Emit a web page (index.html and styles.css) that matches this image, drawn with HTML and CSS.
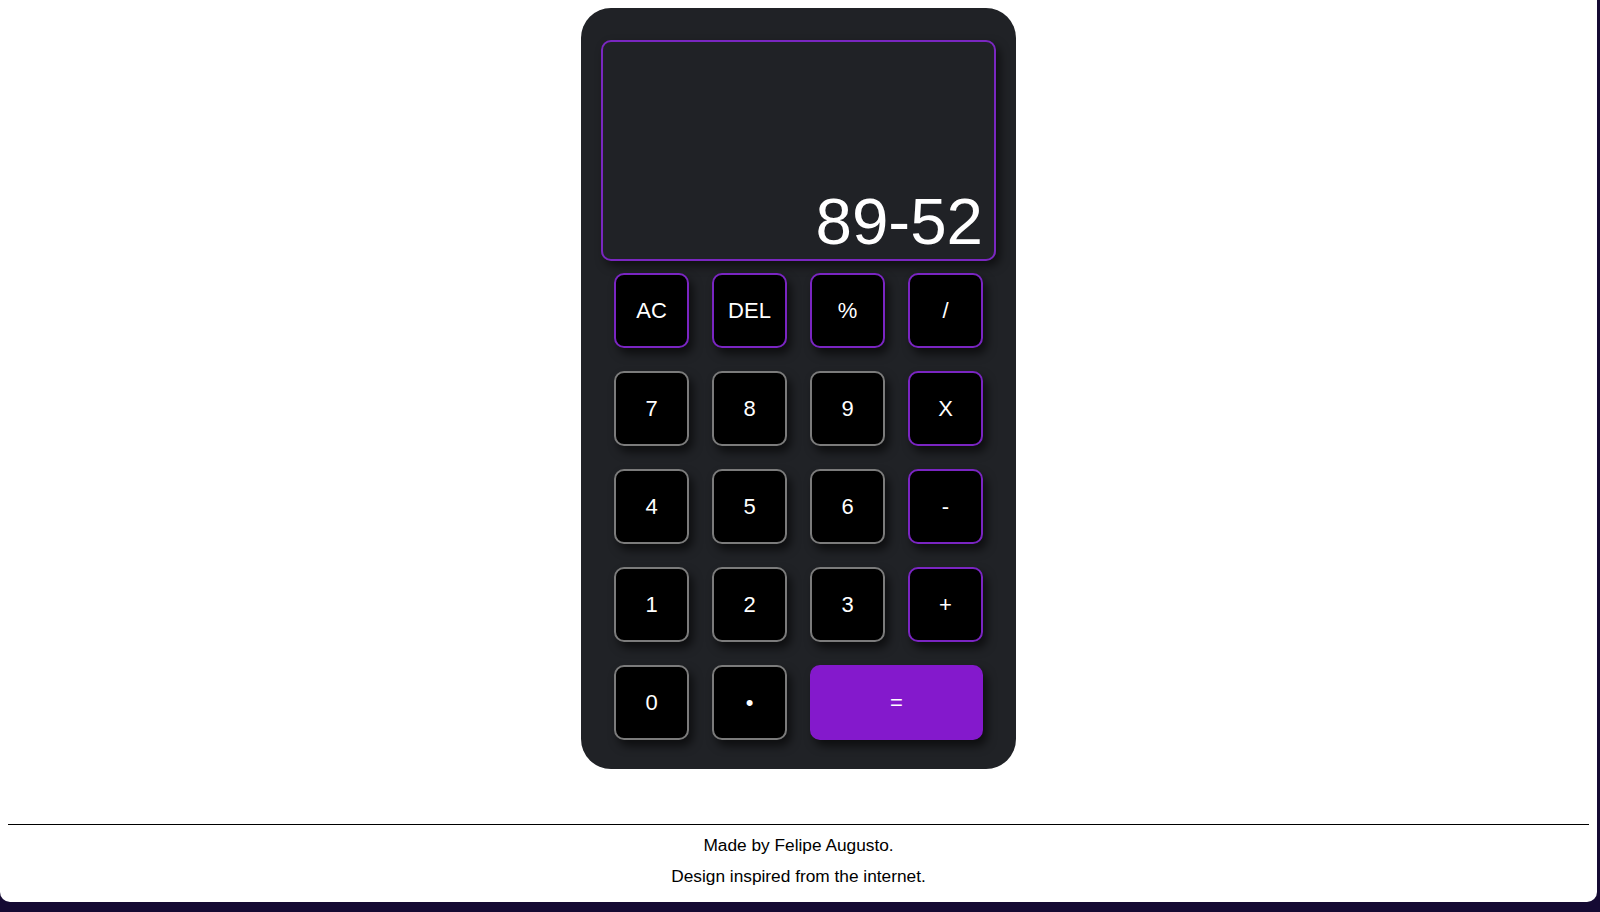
FILE: index.html
```html
<!DOCTYPE html>
<html lang="en">
<head>
<meta charset="utf-8">
<title>Calculator</title>
<link rel="stylesheet" href="styles.css">
</head>
<body>
<div class="window">
  <main class="calculator">
    <div class="display"><span class="screen">89-52</span></div>
    <div class="keys">
      <button class="key op">AC</button>
      <button class="key op">DEL</button>
      <button class="key op">%</button>
      <button class="key op">/</button>
      <button class="key">7</button>
      <button class="key">8</button>
      <button class="key">9</button>
      <button class="key op">X</button>
      <button class="key">4</button>
      <button class="key">5</button>
      <button class="key">6</button>
      <button class="key op">-</button>
      <button class="key">1</button>
      <button class="key">2</button>
      <button class="key">3</button>
      <button class="key op">+</button>
      <button class="key">0</button>
      <button class="key">&bull;</button>
      <button class="key equals">=</button>
    </div>
  </main>
  <footer class="footer">
    <hr class="rule">
    <p class="note">Made by Felipe Augusto.</p>
    <p class="note">Design inspired from the internet.</p>
  </footer>
</div>
</body>
</html>
```
FILE: styles.css
```css
html {
  background: radial-gradient(ellipse 220px 40px at 1000px 912px, #3a0f55 0%, rgba(40,10,70,0) 100%), #150a33;
}
body {
  margin: 0;
  font-family: "Liberation Sans", Arial, sans-serif;
}
.window {
  width: 1597px;
  height: 902px;
  box-sizing: border-box;
  padding: 8px;
  background: #ffffff;
  border-radius: 0 0 10px 10px;
  overflow: hidden;
}
.calculator {
  width: 435px;
  box-sizing: border-box;
  margin: 0 auto;
  padding: 32px 20px 29px;
  background: #202226;
  border-radius: 30px;
}
.display {
  height: 221px;
  box-sizing: border-box;
  border: 2px solid #7a27c0;
  border-radius: 10px;
  display: flex;
  justify-content: flex-end;
  align-items: flex-end;
  padding: 0 11px 0 14px;
  box-shadow: 4px 5px 10px rgba(0, 0, 0, 0.55);
}
.screen {
  color: #ffffff;
  font-size: 65.5px;
  line-height: normal;
}
.keys {
  margin-top: 12px;
  display: grid;
  grid-template-columns: repeat(4, 75px);
  grid-auto-rows: 75px;
  gap: 23px;
  justify-content: center;
}
.key {
  background: #000000;
  color: #ffffff;
  border: 2px solid #7b7b7b;
  border-radius: 10px;
  font-family: "Liberation Sans", Arial, sans-serif;
  font-size: 22px;
  padding: 0;
  box-shadow: 4px 6px 10px rgba(0, 0, 0, 0.6);
}
.key.op {
  border-color: #7a25c2;
}
.key.equals {
  grid-column: span 2;
  background: #8419cc;
  border-color: #8419cc;
}
.footer {
  margin-top: 55px;
  text-align: center;
}
.rule {
  margin: 0;
  border: none;
  border-top: 1px solid #000000;
  height: 0;
}
.note {
  margin: 10px 0 0;
  font-size: 17.3px;
  line-height: 20px;
  color: #000000;
}
.note + .note {
  margin-top: 11px;
}
```
